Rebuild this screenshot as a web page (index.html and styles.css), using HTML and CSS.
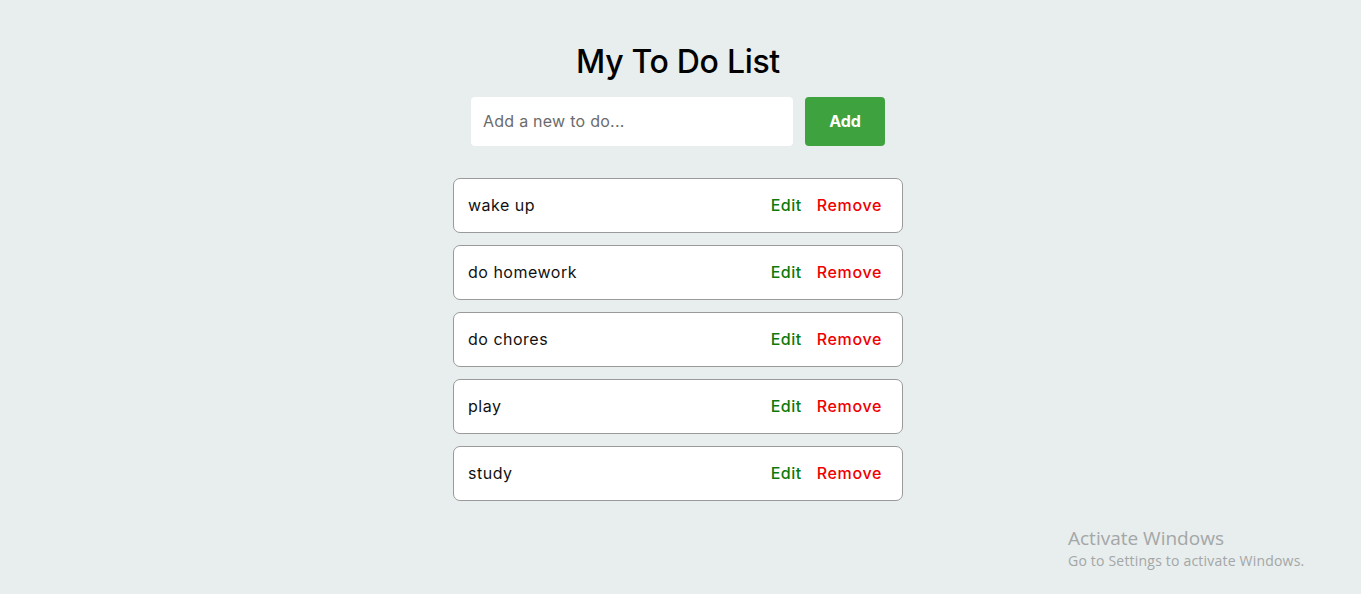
FILE: index.html
```html
<!DOCTYPE html>
<html lang="en">
<head>
<meta charset="utf-8">
<title>My To Do List</title>
<link rel="stylesheet" href="styles.css">
</head>
<body>
<div class="page">
  <main class="app">
    <h1 class="title">My To Do List</h1>
    <form class="add-form">
      <input class="add-input" type="text" placeholder="Add a new to do...">
      <button class="add-btn" type="button">Add</button>
    </form>
    <ul class="todo-list">
      <li class="todo"><span class="todo-text">wake up</span><span class="todo-actions"><span class="edit">Edit</span><span class="remove">Remove</span></span></li>
      <li class="todo"><span class="todo-text">do homework</span><span class="todo-actions"><span class="edit">Edit</span><span class="remove">Remove</span></span></li>
      <li class="todo"><span class="todo-text">do chores</span><span class="todo-actions"><span class="edit">Edit</span><span class="remove">Remove</span></span></li>
      <li class="todo"><span class="todo-text">play</span><span class="todo-actions"><span class="edit">Edit</span><span class="remove">Remove</span></span></li>
      <li class="todo"><span class="todo-text">study</span><span class="todo-actions"><span class="edit">Edit</span><span class="remove">Remove</span></span></li>
    </ul>
  </main>
</div>
<div class="watermark">
  <div class="wm-title">Activate Windows</div>
  <div class="wm-sub">Go to Settings to activate Windows.</div>
</div>
</body>
</html>
```
FILE: styles.css
```css
* { box-sizing: border-box; }
html, body { margin: 0; padding: 0; }
body {
  background: #e8eded;
  font-family: "Inter", "Noto Sans", sans-serif;
  color: #111;
  height: 594px;
  overflow: hidden;
}
.page {
  width: 1356px;
  display: flex;
  justify-content: center;
}
.app {
  width: 450px;
  display: flex;
  flex-direction: column;
  align-items: center;
  padding-top: 40px;
}
.title {
  margin: 0;
  font-size: 32px;
  font-weight: 500;
  line-height: 44px;
  letter-spacing: -0.3px;
  color: #000;
}
.add-form {
  display: flex;
  gap: 12px;
  margin-top: 13px;
}
.add-input {
  width: 322px;
  height: 49px;
  border: none;
  border-radius: 4px;
  background: #fff;
  padding: 0 12px 2px;
  font-family: inherit;
  font-size: 16px;
  letter-spacing: 0.25px;
  color: #333;
  outline: none;
}
.add-input::placeholder { color: #6b6b6b; }
.add-btn {
  width: 80px;
  height: 49px;
  border: none;
  border-radius: 4px;
  background: #3ea33e;
  color: #fff;
  font-family: inherit;
  font-size: 16px;
  font-weight: 700;
  padding-bottom: 2px;
}
.todo-list {
  list-style: none;
  margin: 32px 0 0;
  padding: 0;
  width: 450px;
  display: flex;
  flex-direction: column;
  gap: 12px;
}
.todo {
  height: 55px;
  background: #fff;
  border: 1px solid #9a9a9a;
  border-radius: 7px;
  display: flex;
  align-items: center;
  justify-content: space-between;
  padding: 0 20px 2px 14px;
  font-size: 16px;
  letter-spacing: 0.5px;
}
.todo-text { color: #111; }
.todo-actions {
  display: flex;
  gap: 15px;
  font-weight: 500;
}
.edit { color: #0b7a0b; }
.remove { color: #f00000; letter-spacing: 0.65px; }
.watermark {
  position: absolute;
  left: 1068px;
  top: 526px;
  font-family: "Open Sans", "Noto Sans", sans-serif;
  color: #a3a7a7;
}
.wm-title { font-size: 19px; line-height: 24px; }
.wm-sub { font-size: 14px; line-height: 22px; letter-spacing: 0.2px; }
```
